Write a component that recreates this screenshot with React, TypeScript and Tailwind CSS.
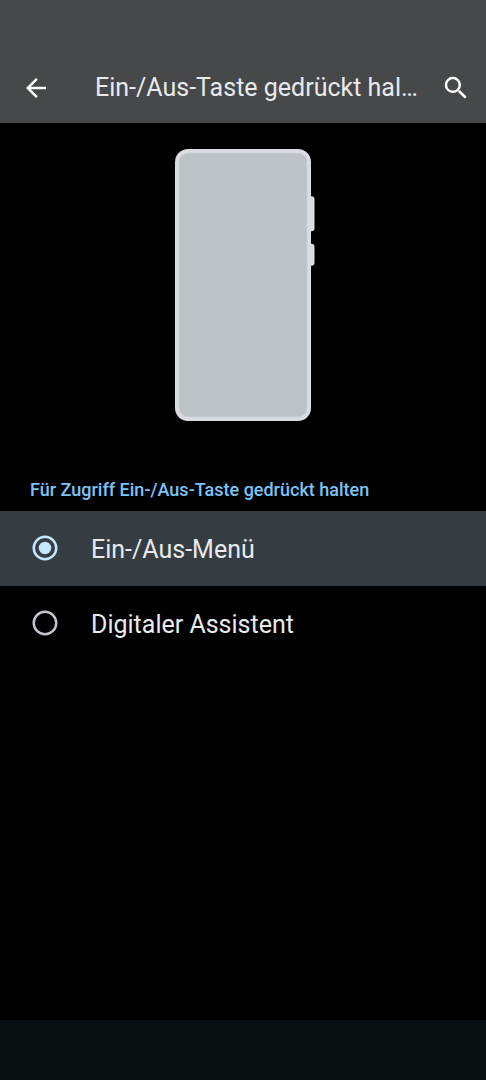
import { useState } from "react";

const options = [
  { id: "menu", label: "Ein-/Aus-Menü" },
  { id: "assistant", label: "Digitaler Assistent" },
];

function BackIcon() {
  return (
    <svg viewBox="0 0 24 24" className="size-[30px]" fill="currentColor" aria-hidden="true">
      <path d="M20 11H7.83l5.59-5.59L12 4l-8 8 8 8 1.41-1.41L7.83 13H20v-2z" />
    </svg>
  );
}

function SearchIcon() {
  return (
    <svg viewBox="0 0 24 24" className="size-[30px]" fill="currentColor" aria-hidden="true">
      <path d="M15.5 14h-.79l-.28-.27A6.471 6.471 0 0 0 16 9.5 6.5 6.5 0 1 0 9.5 16c1.61 0 3.09-.59 4.23-1.57l.27.28v.79l5 4.99L20.49 19l-4.99-5zm-6 0C7.01 14 5 11.99 5 9.5S7.01 5 9.5 5 14 7.01 14 9.5 11.99 14 9.5 14z" />
    </svg>
  );
}

function PhoneDrawing() {
  return (
    <svg viewBox="0 0 140 272" className="h-[272px] w-[140px]" aria-hidden="true">
      <rect x="130" y="47.3" width="9.5" height="35" rx="3" fill="#dadce0" />
      <rect x="130" y="94.8" width="9.5" height="22" rx="3" fill="#dadce0" />
      <rect x="0" y="0" width="136" height="272" rx="13" fill="#dadce0" />
      <rect x="3.5" y="3.5" width="129" height="265" rx="9.5" fill="#cdd1d5" />
      <rect x="4.5" y="4.5" width="127" height="263" rx="8.5" fill="#bcc2c5" />
    </svg>
  );
}

function RadioMark({ checked }: { checked: boolean }) {
  return (
    <svg viewBox="0 0 24 24" className="pointer-events-none absolute inset-0 size-[30px]" aria-hidden="true">
      <circle cx="12" cy="12" r="9" fill="none" stroke="currentColor" strokeWidth="2" />
      {checked && <circle cx="12" cy="12" r="5" fill="currentColor" />}
    </svg>
  );
}

export default function App() {
  const [selected, setSelected] = useState("menu");

  return (
    <div className="flex min-h-screen flex-col bg-black font-['Roboto',sans-serif] text-[#e8eaed]">
      <header className="flex items-center bg-[#474849] pt-[53px] pr-[15px] pl-[21px]">
        <button type="button" aria-label="Zurück" className="shrink-0 text-white">
          <BackIcon />
        </button>
        <h1 className="ml-[44px] flex-1 text-[25px] leading-[70px] whitespace-nowrap">
          Ein-/Aus-Taste gedrückt hal…
        </h1>
        <button type="button" aria-label="Suchen" className="ml-4 shrink-0 text-white">
          <SearchIcon />
        </button>
      </header>

      <main className="flex-1">
        <div className="flex justify-center pt-[26px] pl-1">
          <PhoneDrawing />
        </div>

        <fieldset className="mt-[57px]">
          <legend className="px-[30px] pb-[10px] text-[18px] leading-[23px] font-medium text-[#7cc4f8]">
            Für Zugriff Ein-/Aus-Taste gedrückt halten
          </legend>
          {options.map((option) => {
            const checked = option.id === selected;
            return (
              <label
                key={option.id}
                htmlFor={option.id}
                className={`flex cursor-pointer items-start gap-[31px] px-[30px] pt-[22px] pb-5 ${checked ? "bg-[#353d43]" : ""}`}
              >
                <span className={`relative size-[30px] shrink-0 ${checked ? "text-[#c2e7ff]" : "text-[#c0c5cc]"}`}>
                  <input
                    id={option.id}
                    type="radio"
                    name="power-action"
                    checked={checked}
                    onChange={() => setSelected(option.id)}
                    className="block size-[30px] appearance-none rounded-full outline-none focus-visible:ring-2 focus-visible:ring-current"
                  />
                  <RadioMark checked={checked} />
                </span>
                <span className="text-[25px] leading-[33px]">{option.label}</span>
              </label>
            );
          })}
        </fieldset>
      </main>

      <footer className="h-[60px] bg-[#0a0f12]" />
    </div>
  );
}
